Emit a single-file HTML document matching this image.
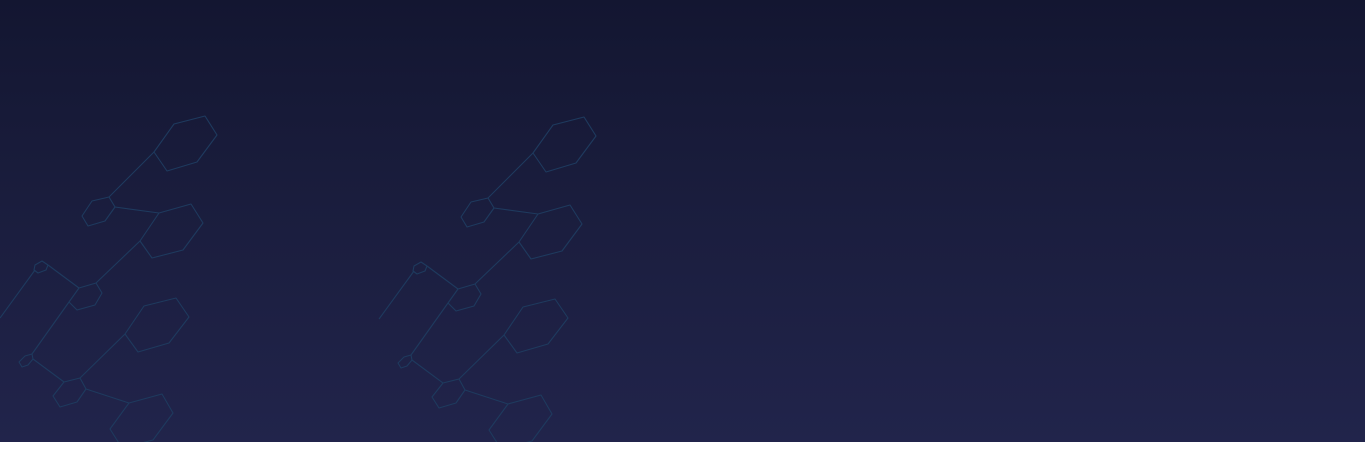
<!DOCTYPE html>
<html><head><meta charset="utf-8"><style>
html,body{margin:0;padding:0;background:#fff;width:1365px;height:450px;overflow:hidden}
.bg{position:absolute;left:0;top:0;width:1365px;height:442px;background:linear-gradient(#131631 0%,#1a1d3d 45%,#21244b 100%);overflow:hidden}
</style></head><body>
<div class="bg">
<svg width="1365" height="442" viewBox="0 0 1365 442" style="position:absolute;left:0;top:0">
<defs>
<g id="p" fill="none" stroke="#1e3a5e" stroke-width="1.1" stroke-linejoin="round">
<polygon points="174,124 205,116 217,135 197,162 167,171 154,152"/>
<line x1="154" y1="152" x2="109" y2="197"/>
<polygon points="109,197 115,207 105,221 88,226 82,216 92,201"/>
<line x1="115" y1="207" x2="159" y2="213"/>
<polygon points="159,213 191,204 203,223 183,250 152,258 140,241"/>
<line x1="140" y1="241" x2="96" y2="283"/>
<polygon points="79,288 96,283 102,293 95,305 77,310 69,302"/>
<line x1="79" y1="288" x2="48" y2="265"/>
<polygon points="35,265 42,261 48,265 46,270 38,273 34,270"/>
<line x1="35" y1="270" x2="0" y2="318"/>
<line x1="69" y1="302" x2="32" y2="354"/>
<polygon points="32,354 33,359 28,365 22,367 19,362 25,356"/>
<line x1="33" y1="359" x2="64" y2="382"/>
<polygon points="64,382 80,378 86,389 77,402 60,407 53,396"/>
<line x1="80" y1="378" x2="125" y2="334"/>
<polygon points="125,334 144,306 176,298 189,317 169,343 138,352"/>
<line x1="86" y1="389" x2="129" y2="403"/>
<polygon points="129,403 162,394 173,413 153,440 122,448 110,429"/>
</g>
</defs>
<use href="#p"/>
<use href="#p" transform="translate(379,1)"/>
</svg>
</div>
</body></html>
